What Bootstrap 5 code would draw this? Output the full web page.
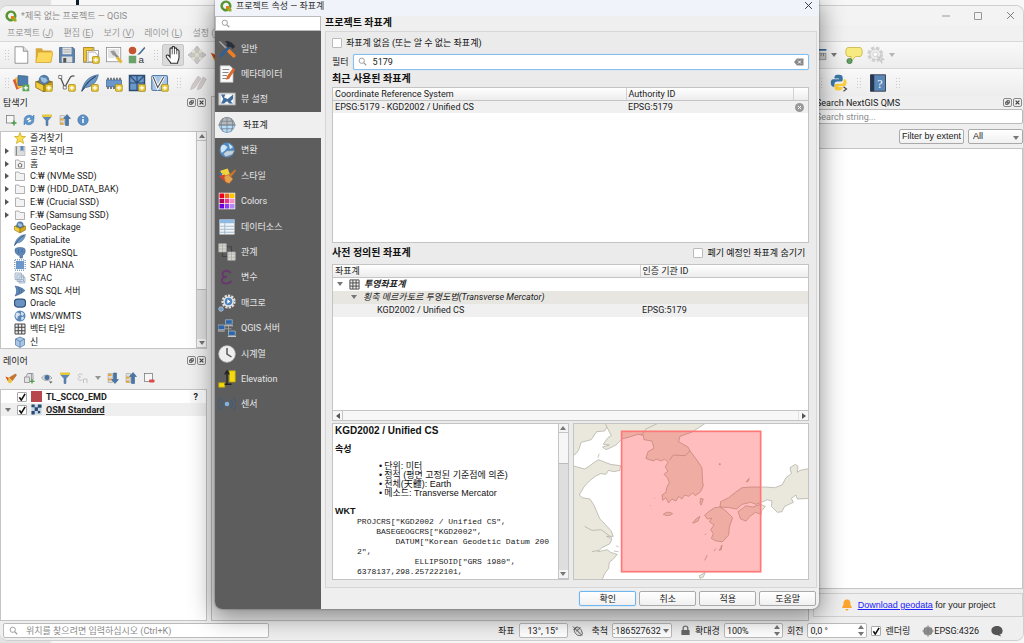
<!DOCTYPE html>
<html lang="ko">
<head>
<meta charset="utf-8">
<meta name="viewport" content="width=device-width, initial-scale=1">
<title>프로젝트 속성 — 좌표계</title>
<link rel="stylesheet" href="https://cdn.jsdelivr.net/npm/bootstrap@5.3.0/dist/css/bootstrap.min.css">
<script src="https://cdn.jsdelivr.net/npm/bootstrap@5.3.0/dist/js/bootstrap.bundle.min.js"></script>
<style>
:root{--line:#c4c4c4;--panel:#efefef;--ink:#222}
body{font-family:Roboto,"Noto Sans CJK KR",sans-serif;font-size:9px;line-height:12px;color:var(--ink);background:linear-gradient(90deg,#e2e2e2 50px,#f7f7f7 52px);height:100vh;overflow:hidden;padding:5px 0 2px}
svg{display:block;flex:none}
button,input,select{font:inherit;color:inherit;margin:0}
button{border:0;background:none;padding:0}
h1,h2,h3{font-size:10px;line-height:14px;margin:0;font-weight:700;color:#111}
ul{list-style:none;margin:0;padding:0}
.topmark{left:76px;top:0;width:3px;height:5px;background:#0d1b2e}
.qwin{height:100%;background:var(--panel);border:1px solid #cfcfcf;border-left:0;border-radius:8px;overflow:hidden}
.qtitle{height:19px;color:#8f8f8f;padding-left:5px;background:#f3f3f3}
.qmenu{height:16px;padding-left:7px;gap:10px;font-size:9px;background:#f1f1f1}
.qmenu a{color:#999;text-decoration:none;white-space:nowrap}
.tbar{height:27px;border-top:1px solid #d8d8d8;background:linear-gradient(#f9f9f9,#ededed)}
.tbar.two{height:28px}
.grip{width:5px;height:12px;flex:none;background:radial-gradient(circle,#c9c9c9 35%,transparent 45%) 0 0/3px 3px}
.ic18 svg{width:18px;height:18px}
.grp{width:140px}.grp.wide{width:163px}
.handbtn{width:22px;height:22px;background:#dadada;border:1px solid #c6c6c6;border-radius:2px}
.rdock{width:210px;flex:none}
.ldock{width:207px;flex:none}
.dtitle{height:13px;padding:0 1px 0 3px;white-space:nowrap}
.dtitle.gapd{margin-top:5px}
.dbtn{width:9px;height:9px;border:1px solid #888;border-radius:2px;color:#444;margin-left:1px;display:flex;align-items:center;justify-content:center}
.dbtn svg{width:5px;height:5px}
.dtools{height:22px;padding-left:5px}
.dtools svg{width:12px;height:12px}
.box{background:#fff;border:1px solid var(--line)}
.tree{height:218px}
.tree li{flex:1 1 0;display:flex;align-items:center;min-height:0;white-space:nowrap}
.tree .tw{width:13px;padding-left:4px}
.tree .ti{width:16px}
.tree .ti svg{width:12px;height:12px}
.tri{width:0;height:0;border:3px solid transparent;border-left:4px solid #555;border-right:0}
.trid{width:0;height:0;border:3px solid transparent;border-top:4px solid #777;border-bottom:0}
.triu{width:0;height:0;border:3px solid transparent;border-bottom:4px solid #777;border-top:0}
.vbar{width:10px;background:#dedede;border-left:1px solid var(--line)}
.vbar button{height:9px;background:#f4f4f4;border-bottom:1px solid var(--line)}
.vbar .thumb{background:#f6f6f6;border-bottom:1px solid #bbb}
.layers li{height:13px;padding-left:4px}
.layers b{color:#222}
.tick.form-check-input{appearance:none;width:10px;height:10px;min-width:10px;border:1px solid #bbb;border-radius:1px;float:none;margin:0;background-color:#fff}
.tick.form-check-input:checked{background-color:#fff;border-color:#aaa;background-image:url("data:image/svg+xml,%3Csvg xmlns='http://www.w3.org/2000/svg' viewBox='0 0 10 10'%3E%3Cpath d='M2 5l2 3L8 1.500' fill='none' stroke='%23111' stroke-width='1.700'/%3E%3C/svg%3E");background-size:9px}
.canvas{background:#e9e9e9;border:1px solid #bbb;margin:0 4px}
.qbtn{height:15px;border:1px solid #aaa;border-radius:2px;background:linear-gradient(#fff,#f0f0f0);white-space:nowrap;font-size:9px;line-height:12px;color:#222}
.lsans{font-family:"Liberation Sans","Noto Sans CJK KR",sans-serif;font-size:9px}
.fld{border:1px solid #bbb;background:#fff;border-radius:2px;min-width:0;outline:0}
.fld::placeholder,.bare::placeholder{color:#8a8a8a;opacity:1}
.bare{border:0;background:none;outline:0;min-width:0;padding:0}
.sbar{height:19px;background:#efefef;white-space:nowrap}
.sbar .fld{height:15px}
.spin{width:8px;gap:3px}
/* dialog */
.dlg{position:absolute;left:21%;right:20%;top:0;bottom:34px;background:#efefef;border-radius:0 0 7px 7px;box-shadow:0 6px 24px 2px rgba(0,0,0,.42),0 0 2px rgba(0,0,0,.5);overflow:hidden}
.dhead{height:16px;background:#f0f3f9;padding:0 6px 0 5px;color:#333}
.side{width:106px;flex:none;background:#5d5d5d}
.side .srch{height:15px;background:#fff;border:1px solid #bbb;padding-left:5px}
.side ul{height:381px;margin-top:5px}
.side li{flex:1 1 0;min-height:0}
.side a{height:100%;display:flex;align-items:center;color:#e6e6e6;text-decoration:none;padding-left:3px;gap:5px;white-space:nowrap}
.side a.on{background:#efefef;color:#222;gap:7px}
.side a svg{width:18px;height:18px}
.frame{border:1px solid #d6d6d6;background:#ebebeb;padding:4px 7px 7px 6px}
.rw{height:14px}
.rw label,.caps label{color:#111}
.filt{height:16px;border:1px solid #83c0f0;border-radius:2px;background:#fff;box-shadow:0 0 1px #83c0f0}
.recent{flex:1 1 156px;min-height:0}.pre{flex:1 1 158px;min-height:0}.btm{flex:1 1 157px;min-height:0;margin-top:2px;gap:4px}
.grid0{width:100%;border-collapse:collapse;table-layout:fixed}
.grid0 th{height:13px;font-weight:400;padding:0 2px;background:linear-gradient(#fff,#ececec);border-bottom:1px solid var(--line);border-right:1px solid #d2d2d2;line-height:12px}
.grid0 th:last-child{border-right:0}
.grid0 td{height:12px;padding:0 2px;line-height:11px;white-space:nowrap}
.grid0.tall td{height:13px}
.c1{width:293px}.c3{width:15px}.p1{width:307px}
.hbar{height:10px;border-top:1px solid var(--line);background:#f7f7f7}
.hbar button{width:10px;border-right:1px solid var(--line)}
.info{flex:1 1 0;min-width:0}
.doc{padding:1px 0 0 2px;overflow:hidden;font-family:"Liberation Sans","Noto Sans CJK KR",sans-serif;font-size:9px;line-height:9px;color:#111}
.doc h3{font-size:9px;line-height:12px}
.doc h3.big{font-size:10px}
.doc h3.sub{margin-top:6px}
.doc ul{margin:7px 0 7px 44px}
.doc li{height:9px;line-height:9px}
.doc li::before{content:"•";margin-right:2px}
.doc pre{font:8px/10px "Liberation Mono",monospace;margin:0 0 0 22px;overflow:hidden;color:#222}
.foot{height:21px;padding:0 1px 0 0;gap:3px}
.foot button{width:57px;height:15px}
.foot .def{border-color:#6db6ef;box-shadow:0 0 1px #6db6ef}
</style>
</head>
<body>
<svg width="0" height="0" class="position-absolute" aria-hidden="true">
<defs>
<symbol id="q" viewBox="0 0 24 24"><path d="M12 1a11 11 0 1 0 5 20.700l-4-4.200A6 6 0 1 1 17.700 13l4.100 4A11 11 0 0 0 12 1z" fill="#589632"/><path d="M12 12h5l6 6v5h-5l-6-6z" fill="#93b023"/><path d="M12 12h4l3 3-4 4-3-3z" fill="#ee7913"/></symbol>
<symbol id="mag" viewBox="0 0 24 24"><circle cx="10" cy="10" r="7" fill="none" stroke="#999" stroke-width="2.500"/><path d="M15 15l7 7" stroke="#999" stroke-width="3"/></symbol>
<symbol id="plus" viewBox="0 0 24 24"><rect x="14" y="14" width="9" height="9" rx="1" fill="#e9c93a" stroke="#a58a13"/><path d="M18.500 15.500v6M15.500 18.500h6" stroke="#fff" stroke-width="1.600"/></symbol>
<symbol id="new" viewBox="0 0 24 24"><path d="M4 1h11l6 6v16H4z" fill="#fff" stroke="#777"/><path d="M15 1v6h6" fill="#ddd" stroke="#777"/></symbol>
<symbol id="open" viewBox="0 0 24 24"><path d="M1 3h8l2 3h11v15H1z" fill="#d9a93b"/><path d="M4 8h20l-3 14H1z" fill="#fbd85a" stroke="#d2a12c"/></symbol>
<symbol id="save" viewBox="0 0 24 24"><path d="M2 2h18l2 2v18H2z" fill="#5c83ad" stroke="#44617f"/><rect x="6" y="2" width="12" height="9" fill="#e6e6e6"/><path d="M7 5h10M7 8h10" stroke="#999"/><rect x="5" y="14" width="14" height="8" fill="#ddd"/><rect x="7" y="16" width="4" height="6" fill="#555"/></symbol>
<symbol id="layout" viewBox="0 0 24 24"><path d="M2 2h14v4h6v16H2z" fill="#fff" stroke="#888"/><path d="M2 2h13v4H6v15H2z" fill="#edc23c" stroke="#a78517"/><path d="M8 8h9l4 4v9H8z" fill="#fafafa" stroke="#999"/><use href="#plus"/></symbol>
<symbol id="lman" viewBox="0 0 24 24"><rect x="2" y="2" width="19" height="19" fill="#fff" stroke="#888"/><path d="M4 4h15v12H4z" fill="#e4e4e4"/><path d="M11 9l7 7" stroke="#888" stroke-width="3"/><path d="M16 15l6 7" stroke="#e4b93a" stroke-width="4"/><path d="M7 7l5-1 3 4-4 3-2-3z" fill="#999"/></symbol>
<symbol id="style" viewBox="0 0 24 24"><circle cx="6" cy="6" r="5" fill="#c4532f"/><rect x="1" y="13" width="10" height="10" fill="#69a36b"/><path d="M22 1l-8 9-2 2 4-1 7-8z" fill="#4a6f99"/><text x="14" y="22" font-size="13" font-family="Liberation Sans" fill="#333">a</text></symbol>
<symbol id="hand" viewBox="0 0 24 24"><path d="M8 14V4c0-2 3-2 3 0V2c0-2 3-2 3 0v2c0-2 3-2 3 0v2c0-2 3-1 3 1v8c0 4-2 5-2 8H9c0-3-7-7-6-10 1-2 3-1 5 2z" fill="#fff" stroke="#333" stroke-width="1.500"/><path d="M11 4v7M14 4v7M17 5v6" stroke="#333"/></symbol>
<symbol id="pan" viewBox="0 0 24 24"><path d="M12 0l4 5h-2v4h-4V5H8zM12 24l4-5h-2v-4h-4v4H8zM0 12l5-4v2h4v4H5v2zM24 12l-5-4v2h-4v4h4v2z" fill="#c9c9c9" stroke="#b5b5b5"/><rect x="5" y="5" width="14" height="14" fill="#cfcfbd" opacity=".5"/></symbol>
<symbol id="lyr" viewBox="0 0 24 24"><path d="M1 8l12-5 5 12-12 6z" fill="#d95c30"/><path d="M4 5l13-3 4 13-13 4z" fill="#edc23c"/><path d="M8 2l13 1v13L8 15z" fill="#4d7cae" stroke="#375c85"/><rect x="14" y="14" width="9" height="9" fill="#5aa357"/><path d="M18.500 15.500v6M15.500 18.500h6" stroke="#fff" stroke-width="1.600"/></symbol>
<symbol id="gpk0" viewBox="0 0 24 24"><path d="M1 10l11-4 11 4-11 6z" fill="#8a6d12"/><circle cx="12" cy="8" r="7" fill="#557ca5"/><path d="M7 5c3-2 4 1 7 0l3 4-4 3-4-2z" fill="#9cc0e2"/><path d="M1 10l11 5v9L1 18z" fill="#f2cd3a" stroke="#7a6319"/><path d="M23 10l-11 5v9l11-6z" fill="#d3a91c" stroke="#7a6319"/></symbol>
<symbol id="gpk" viewBox="0 0 24 24"><use href="#gpk0"/><use href="#plus"/></symbol>
<symbol id="vec" viewBox="0 0 24 24"><path d="M3 4l6 14L16 5c1-2 4-3 6-2" fill="none" stroke="#555" stroke-width="1.800"/><path d="M1 2h4v4H1zM7 16h4v4H7z" fill="#fff" stroke="#555"/><use href="#plus"/></symbol>
<symbol id="fea0" viewBox="0 0 24 24"><path d="M1 23C3 12 9 3 23 1c-2 10-8 16-17 17z" fill="#6f9ac8" stroke="#40658f"/><path d="M1 23C6 14 12 7 20 3" fill="none" stroke="#2e4c70" stroke-width="1.500"/></symbol>
<symbol id="fea" viewBox="0 0 24 24"><use href="#fea0"/><use href="#plus"/></symbol>
<symbol id="chip0" viewBox="0 0 24 24"><rect x="4" y="4" width="16" height="16" fill="#6b97cb"/><path d="M2 1.500h20M2 22.500h20M1.500 2v20M22.500 2v20" stroke="#87a5c8" stroke-width="3" stroke-dasharray="2 2"/></symbol>
<symbol id="chip" viewBox="0 0 24 24"><path d="M3 7h19M3 18h19" stroke="#555" stroke-width="4" stroke-dasharray="2 2"/><rect x="2" y="8" width="20" height="9" fill="#6b97cb" stroke="#4a6f9b"/><use href="#plus"/></symbol>
<symbol id="mesh" viewBox="0 0 24 24"><rect x="2" y="2" width="20" height="20" fill="#6b97cb" stroke="#2e4c70" stroke-width="2"/><path d="M2 12h20M12 2v20M2 2l10 10L22 2" fill="none" stroke="#2e4c70" stroke-width="1.500"/><use href="#plus"/></symbol>
<symbol id="vm" viewBox="0 0 24 24"><rect x="1" y="2" width="21" height="20" rx="2" fill="#a9c6e6" stroke="#557ca5" stroke-width="1.500"/><path d="M3 4l6 14L17 4" fill="none" stroke="#fff" stroke-width="4"/><path d="M3 4l6 14L17 4" fill="none" stroke="#555" stroke-width="1.500"/><use href="#plus"/></symbol>
<symbol id="pens" viewBox="0 0 24 24"><path d="M2 21l2-6L12 3l4 3L8 18zM11 21l2-6 6-11 4 3-7 12z" fill="#d3cccc" stroke="#c2bcbc"/></symbol>
<symbol id="addp" viewBox="0 0 24 24"><rect x="3" y="3" width="15" height="15" fill="#f6f6f6" stroke="#777" stroke-width="1.500"/><path d="M18 13v10M13 18h10" stroke="#4a9b4f" stroke-width="3"/></symbol>
<symbol id="ref" viewBox="0 0 24 24"><path d="M2 11C3 3 14 0 19 5l3-3v9h-9l3-3c-4-3-8-1-9 3zM22 13c-1 8-12 11-17 6l-3 3v-9h9l-3 3c4 3 8 1 9-3z" fill="#5b96d2" stroke="#396ea6"/></symbol>
<symbol id="fun" viewBox="0 0 24 24"><path d="M2 4h20l-8 9v10h-4V13z" fill="#5c88b8" stroke="#40658f"/><path d="M2 1h20v5H2z" fill="#e5c93d"/></symbol>
<symbol id="up" viewBox="0 0 24 24"><path d="M2 3h9v18H2z" fill="#ddd" stroke="#999"/><path d="M2 9h7v4H2zM2 17h7v4H2z" fill="#e8a33b"/><path d="M16 1l7 8h-4v14h-6V9H9z" fill="#4477ac" stroke="#2f5680"/></symbol>
<symbol id="down" viewBox="0 0 24 24"><path d="M2 3h9v18H2z" fill="#ddd" stroke="#999"/><path d="M2 4h7v4H2zM2 13h7v4H2z" fill="#e8a33b"/><path d="M16 23l7-8h-4V2h-6v13H9z" fill="#4477ac" stroke="#2f5680"/></symbol>
<symbol id="inf" viewBox="0 0 24 24"><circle cx="12" cy="12" r="10.500" fill="#5b8fc5" stroke="#3e6a99"/><path d="M12 10v8M12 5v3" stroke="#fff" stroke-width="3"/></symbol>
<symbol id="star" viewBox="0 0 24 24"><path d="M12 1l3 8h8l-6 5 2 9-7-5-7 5 2-9-6-5h8z" fill="#fbe04f" stroke="#c9a51c" stroke-width="1.500"/></symbol>
<symbol id="bkm" viewBox="0 0 24 24"><path d="M2 3h20v18H2z" fill="#ddd" stroke="#999"/><path d="M5 3v18" stroke="#888" stroke-width="2"/><path d="M13 2h6v11l-3-3-3 3z" fill="#5b86b8"/></symbol>
<symbol id="fold" viewBox="0 0 24 24"><path d="M3 4h7l2 3h9v14H3z" fill="#f3f3f3" stroke="#999" stroke-width="1.500"/></symbol>
<symbol id="homf" viewBox="0 0 24 24"><path d="M3 4h7l2 3h9v14H3z" fill="#f3f3f3" stroke="#999" stroke-width="1.500"/><path d="M7 14l5-4 5 4M9 13v5h6v-5" fill="none" stroke="#555" stroke-width="1.500"/></symbol>
<symbol id="pg" viewBox="0 0 24 24"><path d="M3 3c5-3 13-3 18 0 3 4 1 9-1 12l-3 1v6h-5l-1-7-2 2-4-3C2 11 1 6 3 3z" fill="#5c88b8" stroke="#34567c"/><path d="M9 5v8M16 5v6" stroke="#34567c"/></symbol>
<symbol id="stac" viewBox="0 0 24 24"><path d="M2 2h13v13H2zM6 6h13v13H6zM10 10h12v12H10z" fill="#dce8f4" stroke="#9ab" stroke-width="1.500"/><path d="M12 19l4-5 5 5" stroke="#6b97cb" fill="none"/></symbol>
<symbol id="ms" viewBox="0 0 24 24"><path d="M2 2c8 1 15 4 20 9-5 5-11 8-20 11 4-6 4-14 0-20z" fill="#5c88b8" stroke="#34567c"/><path d="M8 4c4 6 3 11 0 15M14 7c2 4 1 7 0 9" fill="none" stroke="#34567c"/></symbol>
<symbol id="ora" viewBox="0 0 24 24"><rect x="1" y="4" width="22" height="16" rx="6" fill="#6b93c1" stroke="#34567c" stroke-width="2.500"/></symbol>
<symbol id="glb" viewBox="0 0 24 24"><circle cx="12" cy="12" r="11" fill="#5c88b8"/><path d="M4 6c4-3 6 1 8 1s0 4-3 5 0 4-3 6c-3-3-4-8-2-12zM14 3l6 4-2 5-4-2zM14 15l5-2 1 4-5 4z" fill="#d5e3f1"/></symbol>
<symbol id="grid" viewBox="0 0 24 24"><rect x="2" y="2" width="20" height="20" fill="#eee"/><path d="M2 2h20v20H2zM2 8.500h20M2 15.500h20M8.500 2v20M15.500 2v20" fill="none" stroke="#444" stroke-width="2"/></symbol>
<symbol id="cube" viewBox="0 0 24 24"><path d="M3 6l9-4 9 4v12l-9 5-9-5z" fill="#a9c6e6" stroke="#557ca5" stroke-width="1.500"/><path d="M3 6l9 5 9-5M12 11v12" fill="none" stroke="#557ca5" stroke-width="1.500"/></symbol>
<symbol id="brush" viewBox="0 0 24 24"><path d="M1 9l7 2 7 7-5 5-4-3z" fill="#edc23c"/><path d="M1 9l6 3-1 6z" fill="#d9432f"/><path d="M9 11l6 6 8-11-2-2z" fill="#c9762c" stroke="#9d571c"/></symbol>
<symbol id="lock0" viewBox="0 0 24 24"><path d="M3 10h10v11H3zM6 10L9 3h8v14M12 3h8v14" fill="#e2e2e2" stroke="#888" stroke-width="1.500"/><path d="M18 14v9M14 18.500h9" stroke="#4a9b4f" stroke-width="2.500"/></symbol>
<symbol id="eye" viewBox="0 0 24 24"><path d="M1 12C6 4 16 4 22 12c-6 7-15 7-21 0z" fill="#ddd" stroke="#777"/><circle cx="12" cy="11" r="5" fill="#44719f"/><path d="M16 19h7l-3.500 4z" fill="#555"/></symbol>
<symbol id="eps" viewBox="0 0 24 24"><path d="M11 5C2 1 0 9 7 10c-8 1-6 9 4 6M13 22v-8h7v8" fill="none" stroke="#c3c3c3" stroke-width="2"/></symbol>
<symbol id="rem" viewBox="0 0 24 24"><rect x="3" y="3" width="16" height="16" fill="#f6f6f6" stroke="#777" stroke-width="1.500"/><rect x="12" y="15" width="11" height="6" rx="2" fill="#de4a4a"/></symbol>
<symbol id="osm" viewBox="0 0 24 24"><path d="M1 1h22v22H1z" fill="#c6d4e4"/><path d="M1 1h7v6H1zM15 1h8v7h-8zM8 7h7v8H8zM1 15h7v8H1zM15 15h5v5h-5z" fill="#294a70"/></symbol>
<symbol id="tool" viewBox="0 0 24 24"><path d="M2 2l9 9" stroke="#aaa" stroke-width="2"/><path d="M12 12l9 9" stroke="#ef7d22" stroke-width="5" stroke-linecap="round"/><path d="M16 8L3 22" stroke="#2f5f96" stroke-width="4"/><path d="M9 2c5-2 10 1 14 7l-4 3c-1-3-3-4-5-2l-3-3c2-2 0-4-2-5z" fill="#2b3038"/></symbol>
<symbol id="meta" viewBox="0 0 24 24"><path d="M3 1h13l4 4v18H3z" fill="#fafafa" stroke="#bbb"/><path d="M6 6h9M6 10h8M6 14h6M6 18h9" stroke="#888" stroke-width="1.500"/><path d="M20 4l3 2-8 12-4 2 1-5z" fill="#e0672a"/></symbol>
<symbol id="view" viewBox="0 0 24 24"><rect x="1" y="4" width="22" height="16" fill="#ddd" stroke="#aaa"/><rect x="4" y="6" width="16" height="12" fill="#fff"/><path d="M4 6h6l-2 4 5 2 7-6v6l-3 3 3 3h-5l-3-3-4 3H4l3-6z" fill="#3f6c9c"/></symbol>
<symbol id="crs" viewBox="0 0 24 24"><circle cx="12" cy="12" r="10" fill="#b9dcf5" stroke="#6d93b5"/><path d="M2 12A10 10 0 0 1 22 12z" fill="#b9b9b9" stroke="#888"/><path d="M0 12h24M12 2v20M7 3c-4 6-3 13 0 18M17 3c4 6 3 13 0 18M4 7h16M4 17h16" fill="none" stroke="#6a7d8d"/></symbol>
<symbol id="tran" viewBox="0 0 24 24"><circle cx="12" cy="12" r="10" fill="#4f8ac2"/><path d="M5 6c4-3 5 1 8 2l-4 5-4 3c-2-3-2-7 0-10zM14 3l6 5-4 3z" fill="#cfe4f6"/><path d="M7 17l5-4h10l-3 5-9 3z" fill="#c6d3de" stroke="#6b8299" stroke-width=".600"/></symbol>
<symbol id="sty" viewBox="0 0 24 24"><path d="M3 5l10-3 3 8-10 3z" fill="#f3d33d"/><path d="M1 12l8-2 3 12z" fill="#d9432f"/><path d="M8 13l6-3 6 6-5 6-5-2z" fill="#e5a44c" stroke="#a8692c" stroke-width=".700"/><path d="M14 11l9-8 1 2-7 9z" fill="#c9762c"/><path d="M1 8l3 5 2-5z" fill="#3c75b0"/></symbol>
<symbol id="col" viewBox="0 0 24 24"><path fill="#f4f4f4" d="M1 1h22v22H1z"/><path fill="#f00018" d="M2 2h6v6H2z"/><path fill="#f46b12" d="M9 2h6v6H9z"/><path fill="#ffc400" d="M16 2h6v6h-6z"/><path fill="#b0005a" d="M2 9h6v6H2z"/><path fill="#e83590" d="M9 9h6v6H9z"/><path fill="#f58bc7" d="M16 9h6v6h-6z"/><path fill="#6a00e0" d="M2 16h6v6H2z"/><path fill="#8d3ff5" d="M9 16h6v6H9z"/><path fill="#b487f7" d="M16 16h6v6h-6z"/></symbol>
<symbol id="data" viewBox="0 0 24 24"><path d="M2 2h20v20H2z" fill="#f4f4f4"/><path d="M2 2h20v5H2z" fill="#8fbbe2"/><path d="M2 11h20M2 15h20M2 19h20M9 7v15" stroke="#9db9d2" stroke-width="1.300"/></symbol>
<symbol id="rel" viewBox="0 0 24 24"><path d="M1 1h10v11H1zM13 12h10v11H13z" fill="#d8d8d0" stroke="#aaa"/><path d="M1 4h10M1 8h10M6 1v11M13 15h10M13 19h10M18 12v11" stroke="#aaa"/><path d="M12 5h6v6M6 13v5h6" fill="none" stroke="#444" stroke-width="1.500"/></symbol>
<symbol id="var" viewBox="0 0 24 24"><path d="M17 7C14 2 6 3 6 8c0 3 3 4 6 4-4 0-7 1-7 5 1 5 10 5 13 0" fill="none" stroke="#67386d" stroke-width="2.400"/></symbol>
<symbol id="mac" viewBox="0 0 24 24"><circle cx="14" cy="10" r="8" fill="none" stroke="#ddd" stroke-width="3" stroke-dasharray="3 1.500"/><circle cx="14" cy="10" r="7" fill="#e6e6e6"/><circle cx="14" cy="10" r="5" fill="#4c82bd"/><path d="M12.500 7l4 3-4 3z" fill="#fff"/><circle cx="4" cy="20" r="3" fill="#6f9ac8" stroke="#bcd"/></symbol>
<symbol id="srv" viewBox="0 0 24 24"><path d="M6 13h12M14 8v10" stroke="#aaa" fill="none"/><path d="M10 1h9v6h-9zM0 8h9v6H0zM14 16h9v6h-9z" fill="#2c66a8" stroke="#a9b5c2"/><path d="M9 9h11M0 16h9M13 23.500h11" stroke="#c7c7c7" stroke-width="1.500"/></symbol>
<symbol id="clk" viewBox="0 0 24 24"><circle cx="12" cy="12" r="11" fill="#eee" stroke="#ccc"/><path d="M12 4v8l6 4" fill="none" stroke="#555" stroke-width="2"/></symbol>
<symbol id="elv" viewBox="0 0 24 24"><path d="M15 1h8v15h-8zM1 17h8v6H1z" fill="#f5d90f" stroke="#b59e08"/><path d="M12 19V2M9 6l3-5 3 5M9 19h9" fill="none" stroke="#222" stroke-width="1.800"/></symbol>
<symbol id="sen" viewBox="0 0 24 24"><circle cx="12" cy="12" r="3" fill="#7fb2e6"/><path d="M7 7c-3 3-3 7 0 10M17 7c3 3 3 7 0 10M3 4c-4 5-4 11 0 16M21 4c4 5 4 11 0 16" fill="none" stroke="#3c5c80" stroke-width="1.500"/></symbol>
<symbol id="tip" viewBox="0 0 24 24"><path d="M4 2h16c4 0 4 12 0 12h-6l-6 7v-7H4C0 14 0 2 4 2z" fill="#f7ea7e" stroke="#c4b13b"/><circle cx="6" cy="20" r="3.500" fill="#5f9f63" stroke="#47764a"/></symbol>
<symbol id="gear" viewBox="0 0 24 24"><circle cx="11" cy="11" r="8" fill="none" stroke="#cfcfcf" stroke-width="5" stroke-dasharray="4 2.300"/><circle cx="11" cy="11" r="7" fill="#ececec" stroke="#c6c6c6"/><circle cx="11" cy="11" r="3" fill="#fff" stroke="#c6c6c6"/><path d="M14 14l9 4-4 1 1 4z" fill="#ddd" stroke="#bbb"/></symbol>
<symbol id="py" viewBox="0 0 24 24"><path d="M11 1c-5 0-5 2-5 5h6v1H4c-4 0-4 9 0 10h2v-4c0-2 2-3 4-3h5c2 0 2-1 2-4 0-4-1-5-6-5z" fill="#3b77a8"/><path d="M11 22c5 0 6-2 6-5h-6v-1h8c4 0 4-8 1-9h-2v3c0 2-1 3-3 3h-5c-3 0-4 1-4 4 0 4 1 5 5 5z" fill="#fccf3a"/><path d="M18 17l4 3-4 3" fill="none" stroke="#444" stroke-width="1.500"/></symbol>
<symbol id="book" viewBox="0 0 24 24"><path d="M2 1h20v22H2z" fill="#5c88b8" stroke="#223"/><path d="M2 1h5v22H2z" fill="#27384e"/><text x="11" y="18" font-size="16" font-family="Liberation Serif" fill="#fff">?</text></symbol>
<symbol id="rul" viewBox="0 0 24 24"><path d="M0 3h23" stroke="#3f6e9e" stroke-width="3"/><path d="M0 9h22v11H0z" fill="#ccc" stroke="#777"/><path d="M4 9v5M9 9v5M14 9v5M18 9v5" stroke="#555"/></symbol>
<symbol id="bell" viewBox="0 0 24 24"><path d="M12 1c6 0 7 5 7 10l3 7H2l3-7C5 6 6 1 12 1zM9 20h6c0 4-6 4-6 0z" fill="#fba52c"/></symbol>
<symbol id="mouse" viewBox="0 0 24 24"><path d="M6 7c4-5 10-2 13 4l2 6c-2 6-8 5-12 2-4-4-6-8-3-12z" fill="#ddd" stroke="#444" stroke-width="1.500"/><path d="M2 3l18 18M9 12l8-7M3 10l7-7" stroke="#444" stroke-width="1.800"/></symbol>
<symbol id="lck" viewBox="0 0 24 24"><path d="M7 11V7c0-6 10-6 10 0v4" fill="none" stroke="#777" stroke-width="3"/><rect x="3" y="11" width="18" height="11" rx="1" fill="#666"/></symbol>
<symbol id="crg" viewBox="0 0 24 24"><circle cx="12" cy="12" r="9" fill="#999"/><path d="M0 12h24M12 0v24M6 5c-3 5-3 10 0 14M18 5c3 5 3 10 0 14M4 8h16M4 16h16" fill="none" stroke="#666"/></symbol>
<symbol id="chat" viewBox="0 0 24 24"><path d="M12 2c14 0 14 17 5 17l4 4-9-3C-3 20-3 2 12 2z" fill="#555"/></symbol>
<symbol id="x" viewBox="0 0 24 24"><path d="M3 3l18 18M21 3L3 21" stroke="currentColor" stroke-width="2.500"/></symbol>
<symbol id="xb" viewBox="0 0 24 24"><path d="M3 3l18 18M21 3L3 21" stroke="currentColor" stroke-width="6"/></symbol>
<symbol id="fl" viewBox="0 0 24 24"><path d="M9 3h12v12H9zM3 9h12v12H3z" fill="none" stroke="currentColor" stroke-width="4"/></symbol>
</defs>
</svg>
<div class="topmark position-absolute"></div>

<div class="qwin d-flex flex-column">
  <header class="qtitle d-flex align-items-center flex-none">
    <svg width="12" height="12"><use href="#q"/></svg><span class="ps-1">*제목 없는 프로젝트 — QGIS</span>
    <span class="ms-auto d-flex align-items-center gap-4 pe-2">
      <button aria-label="최소화"><svg width="8" height="8" viewBox="0 0 8 8"><path d="M0 4h8" stroke="#999"/></svg></button>
      <button aria-label="최대화"><svg width="8" height="8" viewBox="0 0 8 8"><path d="M.5.500h7v7h-7z" fill="none" stroke="#999"/></svg></button>
      <button aria-label="닫기" class="text-secondary"><svg width="9" height="9"><use href="#x"/></svg></button>
    </span>
  </header>
  <nav class="qmenu d-flex align-items-center">
    <a href="#">프로젝트 (<u><i>J</i></u>)</a><a href="#">편집 (<u>E</u>)</a><a href="#">보기 (<u>V</u>)</a><a href="#">레이어 (<u>L</u>)</a><a href="#">설정 (<u>S</u>)</a>
  </nav>
  <div class="tbar d-flex align-items-center ic18">
    <span class="grip ms-1"></span>
    <div class="grp d-flex justify-content-around">
      <button aria-label="새로 만들기"><svg><use href="#new"/></svg></button><button aria-label="열기"><svg><use href="#open"/></svg></button><button aria-label="저장"><svg><use href="#save"/></svg></button><button aria-label="새 조판"><svg><use href="#layout"/></svg></button><button aria-label="조판 관리자"><svg><use href="#lman"/></svg></button><button aria-label="스타일 관리자"><svg><use href="#style"/></svg></button>
    </div>
    <span class="grip ms-1 me-1"></span>
    <button class="handbtn d-flex justify-content-center align-items-center" aria-label="이동"><svg><use href="#hand"/></svg></button>
    <button class="ms-1" aria-label="선택으로 이동"><svg><use href="#pan"/></svg></button>
    <button class="ms-1" aria-label="확대"><svg><use href="#brush"/></svg></button>
    <div class="rdock ms-auto d-flex align-items-center">
      <button aria-label="측정"><svg style="width:14px"><use href="#rul"/></svg></button><span class="trid ms-1 me-1"></span>
      <button class="ms-1" aria-label="맵 도움말"><svg><use href="#tip"/></svg></button>
      <button class="ms-1" aria-label="액션"><svg><use href="#gear"/></svg></button><span class="trid ms-1 opacity-50"></span>
    </div>
  </div>
  <div class="tbar two d-flex align-items-center ic18">
    <span class="grip ms-1"></span>
    <div class="grp wide d-flex justify-content-around">
      <button aria-label="데이터소스 관리자"><svg><use href="#lyr"/></svg></button><button aria-label="새 지오패키지"><svg><use href="#gpk"/></svg></button><button aria-label="새 셰이프파일"><svg><use href="#vec"/></svg></button><button aria-label="새 SpatiaLite"><svg><use href="#fea"/></svg></button><button aria-label="새 임시 레이어"><svg><use href="#chip"/></svg></button><button aria-label="새 메시"><svg><use href="#mesh"/></svg></button><button aria-label="새 가상 레이어"><svg><use href="#vm"/></svg></button>
    </div>
    <span class="grip ms-1 me-1"></span>
    <button class="ms-1" aria-label="편집"><svg><use href="#pens"/></svg></button>
    <div class="rdock ms-auto d-flex align-items-center">
      <span class="grip ms-1 me-1"></span>
      <button class="ms-1" aria-label="파이썬 콘솔"><svg><use href="#py"/></svg></button>
      <span class="grip ms-2 me-1"></span>
      <button class="ms-1" aria-label="도움말"><svg><use href="#book"/></svg></button>
      <span class="grip ms-2"></span>
    </div>
  </div>

  <div class="d-flex flex-grow-1" style="min-height:0">
    <aside class="ldock d-flex flex-column">
      <div class="dtitle d-flex align-items-center"><span class="me-auto">탐색기</span><button class="dbtn" aria-label="띄우기"><svg><use href="#fl"/></svg></button><button class="dbtn" aria-label="닫기"><svg><use href="#xb"/></svg></button></div>
      <div class="dtools d-flex align-items-center" style="gap:6px">
        <button aria-label="추가"><svg><use href="#addp"/></svg></button><button aria-label="새로고침"><svg><use href="#ref"/></svg></button><button aria-label="필터"><svg><use href="#fun"/></svg></button><button aria-label="접기"><svg><use href="#up"/></svg></button><button aria-label="정보"><svg><use href="#inf"/></svg></button>
      </div>
      <div class="box tree d-flex">
        <ul class="d-flex flex-column flex-grow-1">
          <li><span class="tw"></span><span class="ti"><svg><use href="#star"/></svg></span>즐겨찾기</li>
          <li><span class="tw"><span class="tri d-block"></span></span><span class="ti"><svg><use href="#bkm"/></svg></span>공간 북마크</li>
          <li><span class="tw"><span class="tri d-block"></span></span><span class="ti"><svg><use href="#homf"/></svg></span>홈</li>
          <li><span class="tw"><span class="tri d-block"></span></span><span class="ti"><svg><use href="#fold"/></svg></span>C:₩ (NVMe SSD)</li>
          <li><span class="tw"><span class="tri d-block"></span></span><span class="ti"><svg><use href="#fold"/></svg></span>D:₩ (HDD_DATA_BAK)</li>
          <li><span class="tw"><span class="tri d-block"></span></span><span class="ti"><svg><use href="#fold"/></svg></span>E:₩ (Crucial SSD)</li>
          <li><span class="tw"><span class="tri d-block"></span></span><span class="ti"><svg><use href="#fold"/></svg></span>F:₩ (Samsung SSD)</li>
          <li><span class="tw"></span><span class="ti"><svg><use href="#gpk0"/></svg></span>GeoPackage</li>
          <li><span class="tw"></span><span class="ti"><svg><use href="#fea0"/></svg></span>SpatiaLite</li>
          <li><span class="tw"></span><span class="ti"><svg><use href="#pg"/></svg></span>PostgreSQL</li>
          <li><span class="tw"></span><span class="ti"><svg><use href="#chip0"/></svg></span>SAP HANA</li>
          <li><span class="tw"></span><span class="ti"><svg><use href="#stac"/></svg></span>STAC</li>
          <li><span class="tw"></span><span class="ti"><svg><use href="#ms"/></svg></span>MS SQL 서버</li>
          <li><span class="tw"></span><span class="ti"><svg><use href="#ora"/></svg></span>Oracle</li>
          <li><span class="tw"></span><span class="ti"><svg><use href="#glb"/></svg></span>WMS/WMTS</li>
          <li><span class="tw"></span><span class="ti"><svg><use href="#grid"/></svg></span>벡터 타일</li>
          <li><span class="tw"></span><span class="ti"><svg><use href="#cube"/></svg></span>신</li>
        </ul>
        <div class="vbar d-flex flex-column"><button class="d-flex align-items-center justify-content-center" aria-label="위로"><span class="triu"></span></button><div class="thumb" style="height:69%"></div><button class="mt-auto d-flex align-items-center justify-content-center" aria-label="아래로"><span class="trid"></span></button></div>
      </div>
      <div class="dtitle gapd d-flex align-items-center"><span class="me-auto">레이어</span><button class="dbtn" aria-label="띄우기"><svg><use href="#fl"/></svg></button><button class="dbtn" aria-label="닫기"><svg><use href="#xb"/></svg></button></div>
      <div class="dtools d-flex align-items-center" style="gap:6px">
        <button aria-label="스타일"><svg><use href="#brush"/></svg></button><button aria-label="그룹 추가"><svg><use href="#lock0"/></svg></button><button aria-label="보기"><svg><use href="#eye"/></svg></button><button aria-label="필터"><svg><use href="#fun"/></svg></button><button aria-label="표현식"><svg><use href="#eps"/></svg></button><span class="trid opacity-75"></span><button aria-label="펼치기"><svg><use href="#down"/></svg></button><button aria-label="접기"><svg><use href="#up"/></svg></button><button aria-label="제거"><svg><use href="#rem"/></svg></button>
      </div>
      <ul class="box layers flex-grow-1">
        <li class="d-flex align-items-center"><span style="width:12px"></span><input type="checkbox" class="form-check-input tick" checked id="l1"><svg class="ms-1 me-1" width="11" height="11"><rect width="11" height="11" fill="#b8474b"/></svg><label for="l1"><b>TL_SCCO_EMD</b></label><b class="ms-auto px-1 me-1 bg-light">?</b></li>
        <li class="d-flex align-items-center" style="background:#efefef"><span style="width:12px"><span class="trid d-block"></span></span><input type="checkbox" class="form-check-input tick" checked id="l2"><svg class="ms-1 me-1" width="11" height="11"><use href="#osm"/></svg><label for="l2"><b><u>OSM Standard</u></b></label></li>
      </ul>
    </aside>
    <main class="canvas flex-grow-1"></main>
    <aside class="rdock d-flex flex-column">
      <div class="dtitle d-flex align-items-center"><span class="me-auto">Search NextGIS QMS</span><button class="dbtn" aria-label="띄우기"><svg><use href="#fl"/></svg></button><button class="dbtn" aria-label="닫기"><svg><use href="#xb"/></svg></button></div>
      <input class="fld" style="height:15px;padding:0 2px" placeholder="Search string..." aria-label="Search string">
      <div class="d-flex align-items-center justify-content-end" style="height:24px;gap:4px">
        <button class="qbtn lsans" style="padding:0 2px">Filter by extent</button>
        <div class="position-relative"><select class="qbtn lsans ps-1" style="width:55px;appearance:none" aria-label="유형"><option>All</option></select><span class="trid position-absolute end-0 top-50 me-1"></span></div>
      </div>
      <div class="box flex-grow-1 mb-1"></div>
      <div class="d-flex align-items-center justify-content-center mb-1 lsans" style="height:24px;border:1px solid #d0d0d0;gap:5px"><svg width="12" height="12"><use href="#bell"/></svg><span><a href="#" style="color:#22f">Download geodata</a> for your project</span></div>
    </aside>
  </div>

  <footer class="sbar d-flex align-items-center pe-1">
    <div class="fld d-flex align-items-center gap-2" style="width:266px;margin-left:3px;padding-left:5px"><svg width="9" height="9"><use href="#mag"/></svg><input class="bare flex-grow-1" placeholder="위치를 찾으려면 입력하십시오 (Ctrl+K)" aria-label="위치 검색"></div>
    <div class="ms-auto d-flex align-items-center" style="gap:4px">
      <label for="co">좌표</label><input id="co" class="fld text-center" style="width:49px" value="13°, 15°">
      <svg width="12" height="12"><use href="#mouse"/></svg>
      <label for="sc" class="ms-1">축척</label>
      <div class="fld d-flex align-items-center" style="width:60px"><input id="sc" class="bare flex-grow-1" style="width:48px" value=":186527632"><span class="trid" style="margin-right:2px"></span></div>
      <svg class="ms-1" width="11" height="11"><use href="#lck"/></svg>
      <label for="mg">확대경</label>
      <div class="fld d-flex align-items-center" style="width:59px;padding-left:2px"><input id="mg" class="bare flex-grow-1" style="width:30px" value="100%"><span class="spin d-flex flex-column"><span class="triu"></span><span class="trid"></span></span></div>
      <label for="ro">회전</label>
      <div class="fld d-flex align-items-center" style="width:60px;padding-left:2px"><input id="ro" class="bare flex-grow-1" style="width:30px" value="0,0 °"><span class="spin d-flex flex-column"><span class="triu"></span><span class="trid"></span></span></div>
      <input type="checkbox" class="form-check-input tick" checked id="rn"><label for="rn">렌더링</label>
      <button class="d-flex align-items-center ms-2"><svg width="12" height="12"><use href="#crg"/></svg><span>EPSG:4326</span></button>
      <button class="ms-2 me-3" aria-label="메시지"><svg width="12" height="12"><use href="#chat"/></svg></button>
    </div>
  </footer>
</div>

<section class="dlg d-flex flex-column" role="dialog" aria-label="프로젝트 속성">
  <div class="dhead d-flex"><svg width="12" height="12"><use href="#q"/></svg><span class="ps-1">프로젝트 속성 — 좌표계</span><button class="ms-auto d-flex" aria-label="닫기"><svg width="9" height="11"><use href="#x"/></svg></button></div>
  <div class="d-flex flex-grow-1" style="min-height:0">
    <nav class="side">
      <div class="srch d-flex align-items-center"><svg width="9" height="9"><use href="#mag"/></svg><input class="bare w-75" aria-label="검색"></div>
      <ul class="d-flex flex-column">
        <li><a href="#"><svg><use href="#tool"/></svg>일반</a></li>
        <li><a href="#"><svg><use href="#meta"/></svg>메타데이터</a></li>
        <li><a href="#"><svg><use href="#view"/></svg>뷰 설정</a></li>
        <li><a href="#" class="on"><svg><use href="#crs"/></svg>좌표계</a></li>
        <li><a href="#"><svg><use href="#tran"/></svg>변환</a></li>
        <li><a href="#"><svg><use href="#sty"/></svg>스타일</a></li>
        <li><a href="#"><svg><use href="#col"/></svg>Colors</a></li>
        <li><a href="#"><svg><use href="#data"/></svg>데이터소스</a></li>
        <li><a href="#"><svg><use href="#rel"/></svg>관계</a></li>
        <li><a href="#"><svg><use href="#var"/></svg>변수</a></li>
        <li><a href="#"><svg><use href="#mac"/></svg>매크로</a></li>
        <li><a href="#"><svg><use href="#srv"/></svg>QGIS 서버</a></li>
        <li><a href="#"><svg><use href="#clk"/></svg>시계열</a></li>
        <li><a href="#"><svg><use href="#elv"/></svg>Elevation</a></li>
        <li><a href="#"><svg><use href="#sen"/></svg>센서</a></li>
      </ul>
    </nav>
    <div class="d-flex flex-column flex-grow-1 ps-1" style="min-width:0;padding-right:2px">
      <h1 style="height:15px">프로젝트 좌표계</h1>
      <div class="frame flex-grow-1 d-flex flex-column" style="min-height:0">
        <div class="rw d-flex align-items-center gap-1"><input type="checkbox" class="form-check-input tick" id="nocrs"><label for="nocrs">좌표계 없음 (또는 알 수 없는 좌표계)</label></div>
        <div class="d-flex align-items-center mt-1 gap-1"><label for="flt">필터</label>
          <div class="filt d-flex align-items-center flex-grow-1 px-1"><svg width="9" height="9"><use href="#mag"/></svg><input id="flt" class="bare flex-grow-1" style="padding-left:6px" value="5179"><button aria-label="지우기"><svg width="10" height="8" viewBox="0 0 20 16"><path d="M6 1h13v14H6L0 8z" fill="#888"/><path d="M8 5l6 6M14 5l-6 6" stroke="#fff" stroke-width="2"/></svg></button></div></div>
        <h2 class="pt-1" style="height:17px;line-height:10px">최근 사용된 좌표계</h2>
        <div class="box recent">
          <table class="grid0"><colgroup><col class="c1"><col><col class="c3"></colgroup>
            <thead><tr><th>Coordinate Reference System</th><th>Authority ID</th><th></th></tr></thead>
            <tbody><tr style="background:#f0f0f0"><td>EPSG:5179 - KGD2002 / Unified CS</td><td>EPSG:5179</td><td><button class="d-block" aria-label="삭제"><svg width="9" height="9" viewBox="0 0 18 18"><circle cx="9" cy="9" r="9" fill="#999"/><path d="M6 6l6 6M12 6l-6 6" stroke="#fff" stroke-width="2"/></svg></button></td></tr></tbody></table>
        </div>
        <div class="caps d-flex align-items-center pe-1" style="height:21px"><h2 class="me-auto">사전 정의된 좌표계</h2><input type="checkbox" class="form-check-input tick me-1" id="dep"><label for="dep">폐기 예정인 좌표계 숨기기</label></div>
        <div class="box pre d-flex flex-column">
          <table class="grid0 tall"><colgroup><col class="p1"><col></colgroup>
            <thead><tr><th>좌표계</th><th>인증 기관 ID</th></tr></thead>
            <tbody>
              <tr><td><span class="d-flex align-items-center" style="padding-left:2px"><span class="trid" style="margin-right:6px"></span><svg class="me-1" width="11" height="11"><use href="#grid"/></svg><b><i>투영좌표계</i></b></span></td><td></td></tr>
              <tr style="background:#e8e6e1"><td><span class="d-flex align-items-center ps-3"><span class="trid" style="margin-right:6px"></span><i>횡축 메르카토르 투영도법(Transverse Mercator)</i></span></td><td></td></tr>
              <tr style="background:#f0f0f0"><td style="padding-left:44px">KGD2002 / Unified CS</td><td>EPSG:5179</td></tr>
            </tbody></table>
          <div class="hbar mt-auto d-flex"><button aria-label="왼쪽" class="d-flex align-items-center justify-content-center"><span class="tri" style="rotate:180deg"></span></button><button aria-label="오른쪽" class="ms-auto d-flex align-items-center justify-content-center border-start border-end-0"><span class="tri"></span></button></div>
        </div>
        <div class="btm d-flex">
          <div class="box info d-flex">
            <div class="doc flex-grow-1">
              <h3 class="big">KGD2002 / Unified CS</h3>
              <h3 class="sub">속성</h3>
              <ul><li>단위: 미터</li><li>정적 (평면 고정된 기준점에 의존)</li><li>천체(天體): Earth</li><li>메소드: Transverse Mercator</li></ul>
              <h3>WKT</h3>
<pre>PROJCRS["KGD2002 / Unified CS",
    BASEGEOGCRS["KGD2002",
        DATUM["Korean Geodetic Datum 200
2",
            ELLIPSOID["GRS 1980",
6378137,298.257222101,</pre>
            </div>
            <div class="vbar d-flex flex-column flex-none"><button class="d-flex align-items-center justify-content-center" aria-label="위로"><span class="triu"></span></button><div class="thumb" style="height:20%"></div><button class="mt-auto d-flex align-items-center justify-content-center" aria-label="아래로"><span class="trid"></span></button></div>
          </div>
          <div class="box info">
            <svg width="100%" height="100%" viewBox="23 15 706 464" preserveAspectRatio="xMidYMid slice">
              <g fill="#eae8dc" stroke="#a9a89c" stroke-width="2" stroke-linejoin="round">
                <path d="M20 10H134L116 36 92 38 76 62 46 70 38 94 30 104 20 112z" />
                <path d="M116 10H422L408 20 376 40 342 52 338 68 366 84 374 98 392 122 408 146 410 188 412 200 404 218 388 230 380 222 368 232 356 228 348 240 338 232 330 246 318 240 308 252 300 236 290 244 288 228 300 220 302 206 310 190 304 176 294 166 306 156 298 144 306 130 296 120 286 126 270 120 264 126 250 122 240 118 246 98 264 88 258 66 234 62 232 48 216 46 190 54 168 60 150 78 134 86 120 92 110 84 130 78 112 76 126 56 136 50z"/>
                <path d="M20 140L34 144 56 150 72 140 82 132 98 122 118 130 134 136 164 140 162 154 144 158 128 154 120 166 104 164 88 172 70 186 54 204 40 228 50 236 72 240 84 258 102 300 110 308 118 316 136 336 142 352 122 352 138 360 132 374 108 386 96 398 124 392 134 400 154 406 142 420 130 430 128 448 116 464 108 484H20z"/>
                <path d="M734 148L702 154 694 160 696 142 688 136 672 146 676 164 660 176 648 198 626 206 598 204 552 204 528 206 508 220 488 236 464 248 462 264 490 266 512 270 528 256 554 250 570 256 596 246 604 242 618 246 616 262 634 280 648 278 656 262 682 250 676 238 690 228 694 240 734 238z"/>
                <path d="M516 278L530 268 540 260 560 264 584 256 598 262 586 276 586 286 568 280 552 292 540 306 524 300z"/>
                <path d="M416 288L428 278 446 266 462 264 478 274 500 296 490 324 488 348 470 368 450 366 436 358 442 344 434 332 444 318 430 308 438 298 424 300z"/>
                <path d="M292 286q14-12 28-2-14 10-28 2zM380 312l10-12 12-8-6 14-14 6zM402 254l2-16 8 2-6 18zM460 394l8-16-2 14zM400 470l18-10-6 14-10 4zM540 188l10-10-4 10zM460 134h3v3h-3z"/>
              </g>
              <path d="M226 50l14-20 38-18M310 124l12-16 36 2 14-14M56 322l22 12 28-2 32 24M78 398l20-4M264 238h2M252 260h2M420 344l-4 4M444 396l6-8M424 408l-8 16M150 380l8 4M144 396l14 2M100 104l-4 12" fill="none" stroke="#a9a89c" stroke-width="2"/>
              <rect x="167" y="37" width="417" height="421" fill="#f00" fill-opacity=".26" stroke="#ff7777" stroke-width="5"/>
            </svg>
          </div>
        </div>
      </div>
      <div class="foot d-flex align-items-center justify-content-end">
        <button class="qbtn def">확인</button><button class="qbtn">취소</button><button class="qbtn">적용</button><button class="qbtn">도움말</button>
      </div>
    </div>
  </div>
</section>
</body>
</html>
